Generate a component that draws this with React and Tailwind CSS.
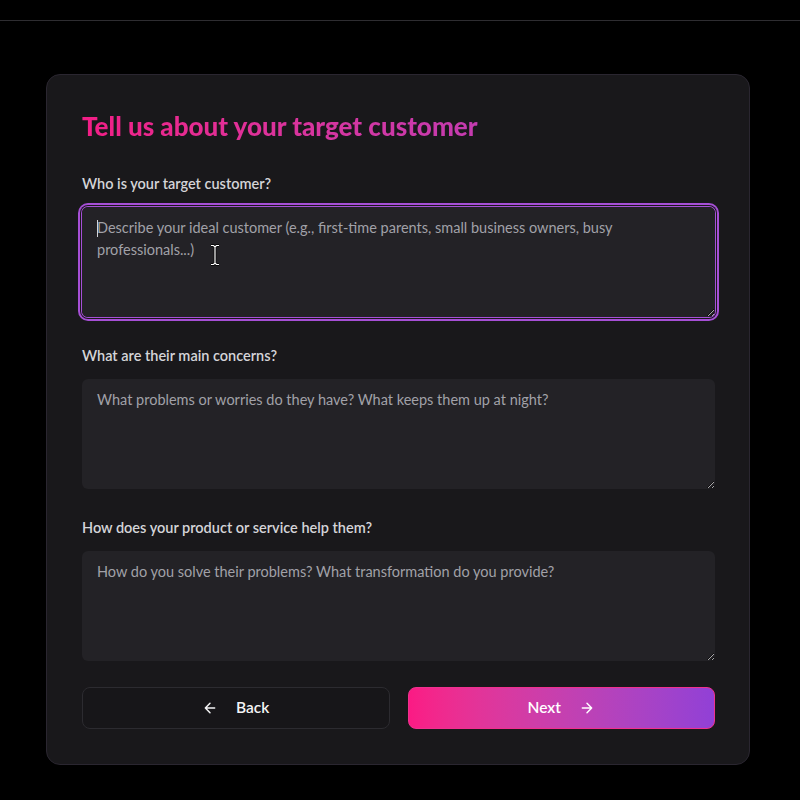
import React from 'react';

const font = { fontFamily: 'Lato, "Noto Sans", sans-serif' };

function Field({ label, placeholder, focused }) {
  return (
    <div className="flex flex-col gap-[13px]">
      <label className="text-[14.5px] font-semibold text-[#d4d4d8] leading-5">{label}</label>
      <div className={`-m-[2px] rounded-[8px] p-[2px] ${focused ? 'bg-[#19181b] ring-2 ring-[#a64fd6]' : ''}`}>
        <div className={`relative rounded-[6px] ${focused ? 'ring-1 ring-[#a64fd6]' : ''}`}>
          <textarea
            className="block w-full h-[110px] resize-y rounded-[6px] bg-[#232226] px-[15px] py-[10px] text-[14.5px] leading-[22px] text-[#e4e4e7] placeholder:text-[#a1a1a8] outline-none"
            style={font}
            placeholder={placeholder}
          />
          {focused && (
            <>
              <span className="absolute left-[15px] top-[13px] w-px h-[17px] bg-[#d4d4d8]" />
              <svg className="absolute left-[128px] top-[37px]" width="10" height="22" viewBox="0 0 10 22">
                <path d="M1 1.5h2.5L5 3l1.5-1.5H9M5 3v16M1 20.5h2.5L5 19l1.5 1.5H9" fill="none" stroke="#000" strokeWidth="2.6" />
                <path d="M1 1.5h2.5L5 3l1.5-1.5H9M5 3v16M1 20.5h2.5L5 19l1.5 1.5H9" fill="none" stroke="#fff" strokeWidth="1.2" />
              </svg>
            </>
          )}
        </div>
      </div>
    </div>
  );
}

function ArrowLeft() {
  return (
    <svg width="16" height="16" viewBox="0 0 24 24" fill="none" stroke="currentColor" strokeWidth="2.2" strokeLinecap="round" strokeLinejoin="round">
      <path d="M19 12H5M12 19l-7-7 7-7" />
    </svg>
  );
}

function ArrowRight() {
  return (
    <svg width="16" height="16" viewBox="0 0 24 24" fill="none" stroke="currentColor" strokeWidth="2.2" strokeLinecap="round" strokeLinejoin="round">
      <path d="M5 12h14M12 5l7 7-7 7" />
    </svg>
  );
}

export default function App() {
  return (
    <div className="w-[800px] h-[800px] bg-black overflow-hidden" style={font}>
      <div className="h-[21px] border-b border-[#2e2d31]" />
      <div className="px-[46px] pt-[53px]">
        <div className="w-[704px] rounded-[14px] border border-[#2a2630] bg-[#19181b] pl-[35px] pr-[34px] pt-[36px] pb-[35px]">
          <h1 className="text-[26px] font-black leading-[30px] bg-gradient-to-r from-[#f31d86] to-[#c43bb0] bg-clip-text text-transparent w-fit">
            Tell us about your target customer
          </h1>
          <div className="mt-[33px] flex flex-col gap-[29px]">
            <Field
              label="Who is your target customer?"
              placeholder="Describe your ideal customer (e.g., first-time parents, small business owners, busy professionals...)"
              focused
            />
            <Field
              label="What are their main concerns?"
              placeholder="What problems or worries do they have? What keeps them up at night?"
            />
            <Field
              label="How does your product or service help them?"
              placeholder="How do you solve their problems? What transformation do you provide?"
            />
          </div>
          <div className="mt-[26px] grid grid-cols-2 gap-[18px]">
            <button className="h-[42px] rounded-[8px] border border-[#2c2b30] bg-[#171619] text-[#f4f4f5] text-[15.5px] font-semibold flex items-center justify-center gap-[18px]">
              <ArrowLeft />
              <span>Back</span>
            </button>
            <button className="h-[42px] rounded-[8px] border border-[#f0308e] bg-gradient-to-r from-[#fb1a84] to-[#9140d6] text-white text-[15.5px] font-semibold flex items-center justify-center gap-[18px]">
              <span>Next</span>
              <ArrowRight />
            </button>
          </div>
        </div>
      </div>
    </div>
  );
}
